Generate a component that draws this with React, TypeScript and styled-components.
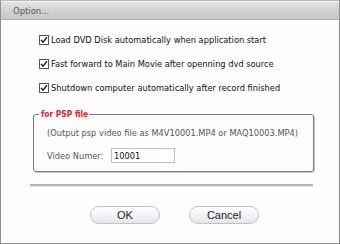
import * as React from 'react';
import styled, { createGlobalStyle } from 'styled-components';

const GlobalStyle = createGlobalStyle`
  html, body {
    margin: 0;
    padding: 0;
    background: #ffffff;
  }
  body {
    font-family: "DejaVu Sans Condensed", "DejaVu Sans", Verdana, sans-serif;
  }
`;

const Window = styled.div`
  width: 340px;
  height: 244px;
  box-sizing: border-box;
  border: 1px solid #8e8e8e;
  border-top-color: #b8b8b8;
  display: flex;
  flex-direction: column;
  background: #fdfdfd;
`;

const TitleBar = styled.div`
  height: 19px;
  box-sizing: border-box;
  border-top: 1px solid #f4f4f4;
  border-bottom: 1px solid #b0b0b0;
  background: linear-gradient(to bottom, #e2e2e2 0%, #d2d2d2 50%, #c6c6c6 100%);
  display: flex;
  align-items: center;
  padding-left: 12px;
  font-size: 9.4px;
  color: #5a5a5a;
`;

const Body = styled.div`
  flex: 1;
  display: flex;
  flex-direction: column;
  padding: 13px 26px 0 28px;
  white-space: nowrap;
`;

const CheckList = styled.div`
  display: flex;
  flex-direction: column;
  gap: 11px;
  padding-left: 10px;
`;

const CheckRow = styled.label`
  display: flex;
  align-items: center;
  gap: 2px;
  height: 13px;
  font-size: 9.2px;
  color: #111;
`;

const Box = styled.span`
  width: 10px;
  height: 10px;
  box-sizing: border-box;
  border: 1px solid #555;
  background: #fff;
  display: flex;
  align-items: center;
  justify-content: center;
`;

const Group = styled.fieldset`
  margin: 15px 0 0 4px;
  padding: 6px 0 8px 13px;
  width: 281px;
  box-sizing: border-box;
  border: 1px solid #7a7a7a;
  border-radius: 3px;
  box-shadow: 1px 1px 0 #c8c8c8;
  display: flex;
  flex-direction: column;
  gap: 9px;
`;

const Legend = styled.legend`
  padding: 0 1px 0 2px;
  margin-left: -8px;
  color: #e8202a;
  font-weight: bold;
  font-size: 8.4px;
`;

const Note = styled.div`
  font-size: 9.2px;
  color: #555;
  height: 14px;
  display: flex;
  align-items: center;
`;

const FieldRow = styled.div`
  display: flex;
  align-items: center;
  font-size: 9.2px;
  color: #555;
`;

const FieldLabel = styled.span`
  width: 64px;
`;

const Input = styled.div`
  width: 64px;
  height: 15px;
  box-sizing: border-box;
  border: 1px solid #a7c4e0;
  background: #fff;
  padding-left: 2px;
  display: flex;
  align-items: center;
  font-size: 9.2px;
  color: #111;
`;

const Separator = styled.div`
  margin: 12px 0 0 1px;
  width: 283px;
  height: 2px;
  background: #b4b4b4;
  border-bottom: 1px solid #e4e4e4;
`;

const Buttons = styled.div`
  display: flex;
  gap: 29px;
  padding: 19px 0 0 61px;
`;

const Button = styled.div`
  width: 70px;
  height: 18px;
  box-sizing: border-box;
  border: 1px solid #b3c6d9;
  border-radius: 9px;
  background: linear-gradient(to bottom, #ffffff 0%, #f2f2f2 55%, #e6e6e6 100%);
  display: flex;
  align-items: center;
  justify-content: center;
  font-family: "Liberation Sans", Arial, sans-serif;
  font-size: 11px;
  color: #222;
`;

const Check = () => (
  <svg width="8" height="8" viewBox="0 0 8 8">
    <path d="M1 4 L3 6.2 L7 1.2" fill="none" stroke="#222" strokeWidth="1.4" />
  </svg>
);

const options = [
  'Load DVD Disk automatically when application start',
  'Fast forward to Main Movie after openning dvd source',
  'Shutdown computer automatically after record finished',
];

export default function App() {
  return (
    <>
      <GlobalStyle />
      <Window>
        <TitleBar>Option...</TitleBar>
        <Body>
          <CheckList>
            {options.map((o) => (
              <CheckRow key={o}>
                <Box>
                  <Check />
                </Box>
                {o}
              </CheckRow>
            ))}
          </CheckList>
          <Group>
            <Legend>for PSP file</Legend>
            <Note>(Output psp video file as M4V10001.MP4 or MAQ10003.MP4)</Note>
            <FieldRow>
              <FieldLabel>Video Numer:</FieldLabel>
              <Input>10001</Input>
            </FieldRow>
          </Group>
          <Separator />
          <Buttons>
            <Button>OK</Button>
            <Button>Cancel</Button>
          </Buttons>
        </Body>
      </Window>
    </>
  );
}
